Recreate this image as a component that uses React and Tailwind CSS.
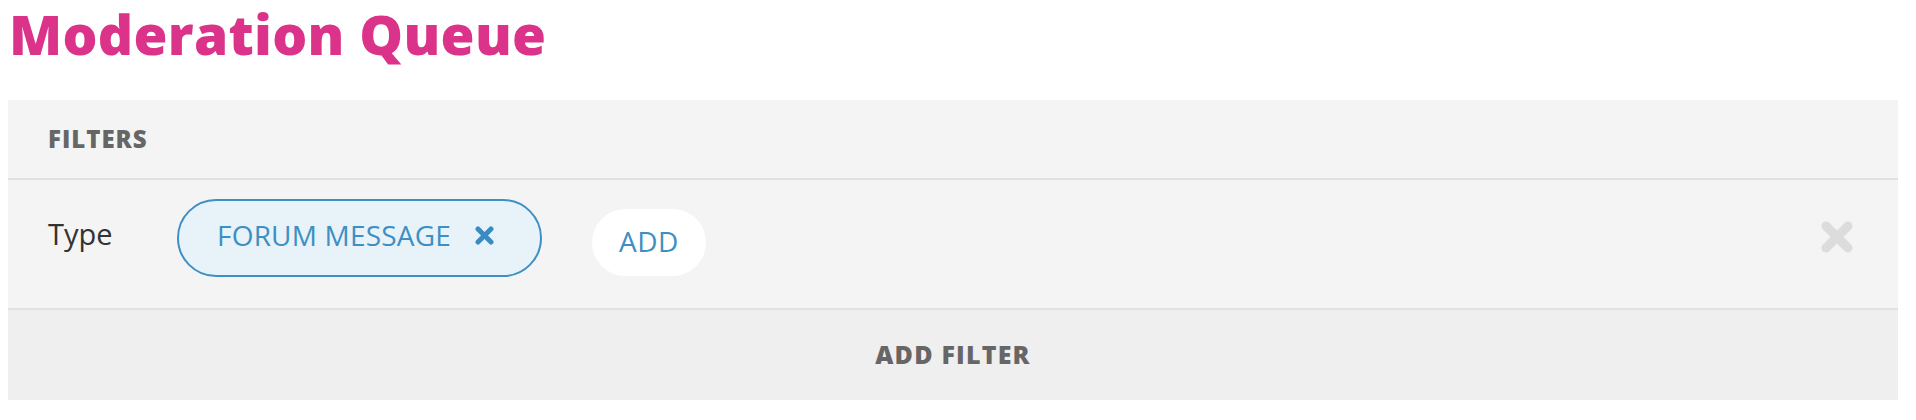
import { useState } from 'react'

function TimesIcon({ className, size = 20, stroke = 5 }) {
  const p = stroke / 2 + 0.5
  return (
    <svg
      width={size}
      height={size}
      viewBox={`0 0 ${size} ${size}`}
      className={className}
      fill="none"
      stroke="currentColor"
      strokeWidth={stroke}
      strokeLinecap="round"
    >
      <line x1={p} y1={p} x2={size - p} y2={size - p} />
      <line x1={size - p} y1={p} x2={p} y2={size - p} />
    </svg>
  )
}

export default function App() {
  const [types, setTypes] = useState(['FORUM MESSAGE'])

  return (
    <div className="min-h-screen bg-white font-['Open_Sans',sans-serif]">
      <div className="h-[100px] pl-[9px]">
        <h1 className="text-[55px] font-extrabold leading-[68px] tracking-[0.3px] text-[#db3389]">
          Moderation Queue
        </h1>
      </div>

      <div className="mx-[8px] w-[1890px]">
        <div className="flex h-[78px] items-center bg-[#f4f4f4] px-[40px]">
          <span className="text-[24px] font-extrabold uppercase tracking-[1px] text-[#666666]">
            Filters
          </span>
        </div>

        <div className="flex h-[130px] items-start border-t-2 border-[#e1e1e1] bg-[#f4f4f4] pl-[40px] pr-[45px] pt-[19px]">
          <div className="mt-[13px] w-[129px] text-[29px] text-[#333333]">Type</div>

          {types.map((t) => (
            <div
              key={t}
              className="flex h-[78px] w-[365px] items-center rounded-full border-2 border-[#3d8fc4] bg-[#e8f3f9] pb-[7px] pl-[38px]"
            >
              <span className="text-[28px] tracking-[0.2px] text-[#3d8fc4]">{t}</span>
              <button
                onClick={() => setTypes(types.filter((x) => x !== t))}
                className="ml-[24px] mt-[2px] text-[#3b8bc1]"
              >
                <TimesIcon size={19} stroke={5} />
              </button>
            </div>
          ))}

          <button className="ml-[50px] mt-[10px] flex h-[67px] w-[114px] items-center justify-center rounded-full bg-white pb-[3px] text-[28px] tracking-[0.5px] text-[#3d8fc4]">
            ADD
          </button>

          <button className="ml-auto mt-[22px] text-[#dcdcdc]">
            <TimesIcon size={32} stroke={9} />
          </button>
        </div>

        <div className="flex h-[92px] items-center justify-center border-t-2 border-[#e1e1e1] bg-[#efefef]">
          <span className="text-[25px] font-extrabold uppercase tracking-[1.2px] text-[#666666]">
            Add Filter
          </span>
        </div>
      </div>
    </div>
  )
}
